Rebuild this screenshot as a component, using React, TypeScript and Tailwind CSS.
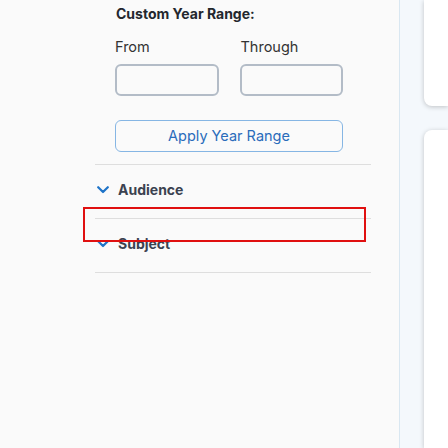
import React from "react";

function Chevron() {
  return (
    <svg width="12" height="8" viewBox="0 0 12 8" className="shrink-0">
      <polyline points="1.2,1.2 6,6 10.8,1.2" fill="none" stroke="#1f74c8" strokeWidth="2.2" strokeLinecap="round" strokeLinejoin="round" />
    </svg>
  );
}

function Section({ title }: { title: string }) {
  return (
    <div className="h-[54px] border-b border-[#dedede] pt-[15px] pl-[2px] flex items-start">
      <div className="h-[20px] flex items-center gap-[9px]">
        <Chevron />
        <span className="text-[14px] font-bold leading-[20px] text-[#3b4250]">{title}</span>
      </div>
    </div>
  );
}

export default function App() {
  return (
    <div className="relative w-[448px] h-[448px] flex overflow-hidden font-['Inter',sans-serif]">
      <aside className="w-[400px] h-full shrink-0 bg-[#fafafa] border-r border-[#d9e7f1] pl-[95px] pr-[28px]">
        <div className="pl-[20px] pr-[28px] pt-[4px] pb-[12px] border-b border-[#dedede]">
          <div className="pl-[1px] text-[14px] font-bold leading-[20px] text-[#23272e]">Custom Year Range:</div>
          <div className="grid grid-cols-2 gap-x-[21px] mt-[13px]">
            <label className="text-[14.5px] leading-[20px] text-[#333]">From</label>
            <label className="text-[14.5px] leading-[20px] text-[#333] pl-[1px]">Through</label>
            <input className="mt-[7px] h-[32px] w-full rounded-[6px] border-2 border-[#b3bcc7] bg-transparent outline-none" />
            <input className="mt-[7px] h-[32px] w-full rounded-[6px] border-2 border-[#b3bcc7] bg-transparent outline-none" />
          </div>
          <button className="mt-[24px] h-[32px] w-full rounded-[6px] border-[1.5px] border-[#86b6e4] bg-transparent text-[14.5px] text-[#2a6cbb]">
            Apply Year Range
          </button>
        </div>
        <Section title="Audience" />
        <Section title="Subject" />
      </aside>
      <div className="flex-1 h-full bg-[#f4f8fc] pl-[24px] flex flex-col">
        <div className="h-[106px] shrink-0 bg-white rounded-bl-[8px] shadow-[0_1px_5px_rgba(0,0,0,0.22)]" />
        <div className="mt-[24px] flex-1 bg-white rounded-tl-[8px] shadow-[0_1px_5px_rgba(0,0,0,0.22)]" />
      </div>
      <div className="absolute left-[83px] top-[207px] w-[283px] h-[35px] border-2 border-[#e01010] pointer-events-none" />
    </div>
  );
}
